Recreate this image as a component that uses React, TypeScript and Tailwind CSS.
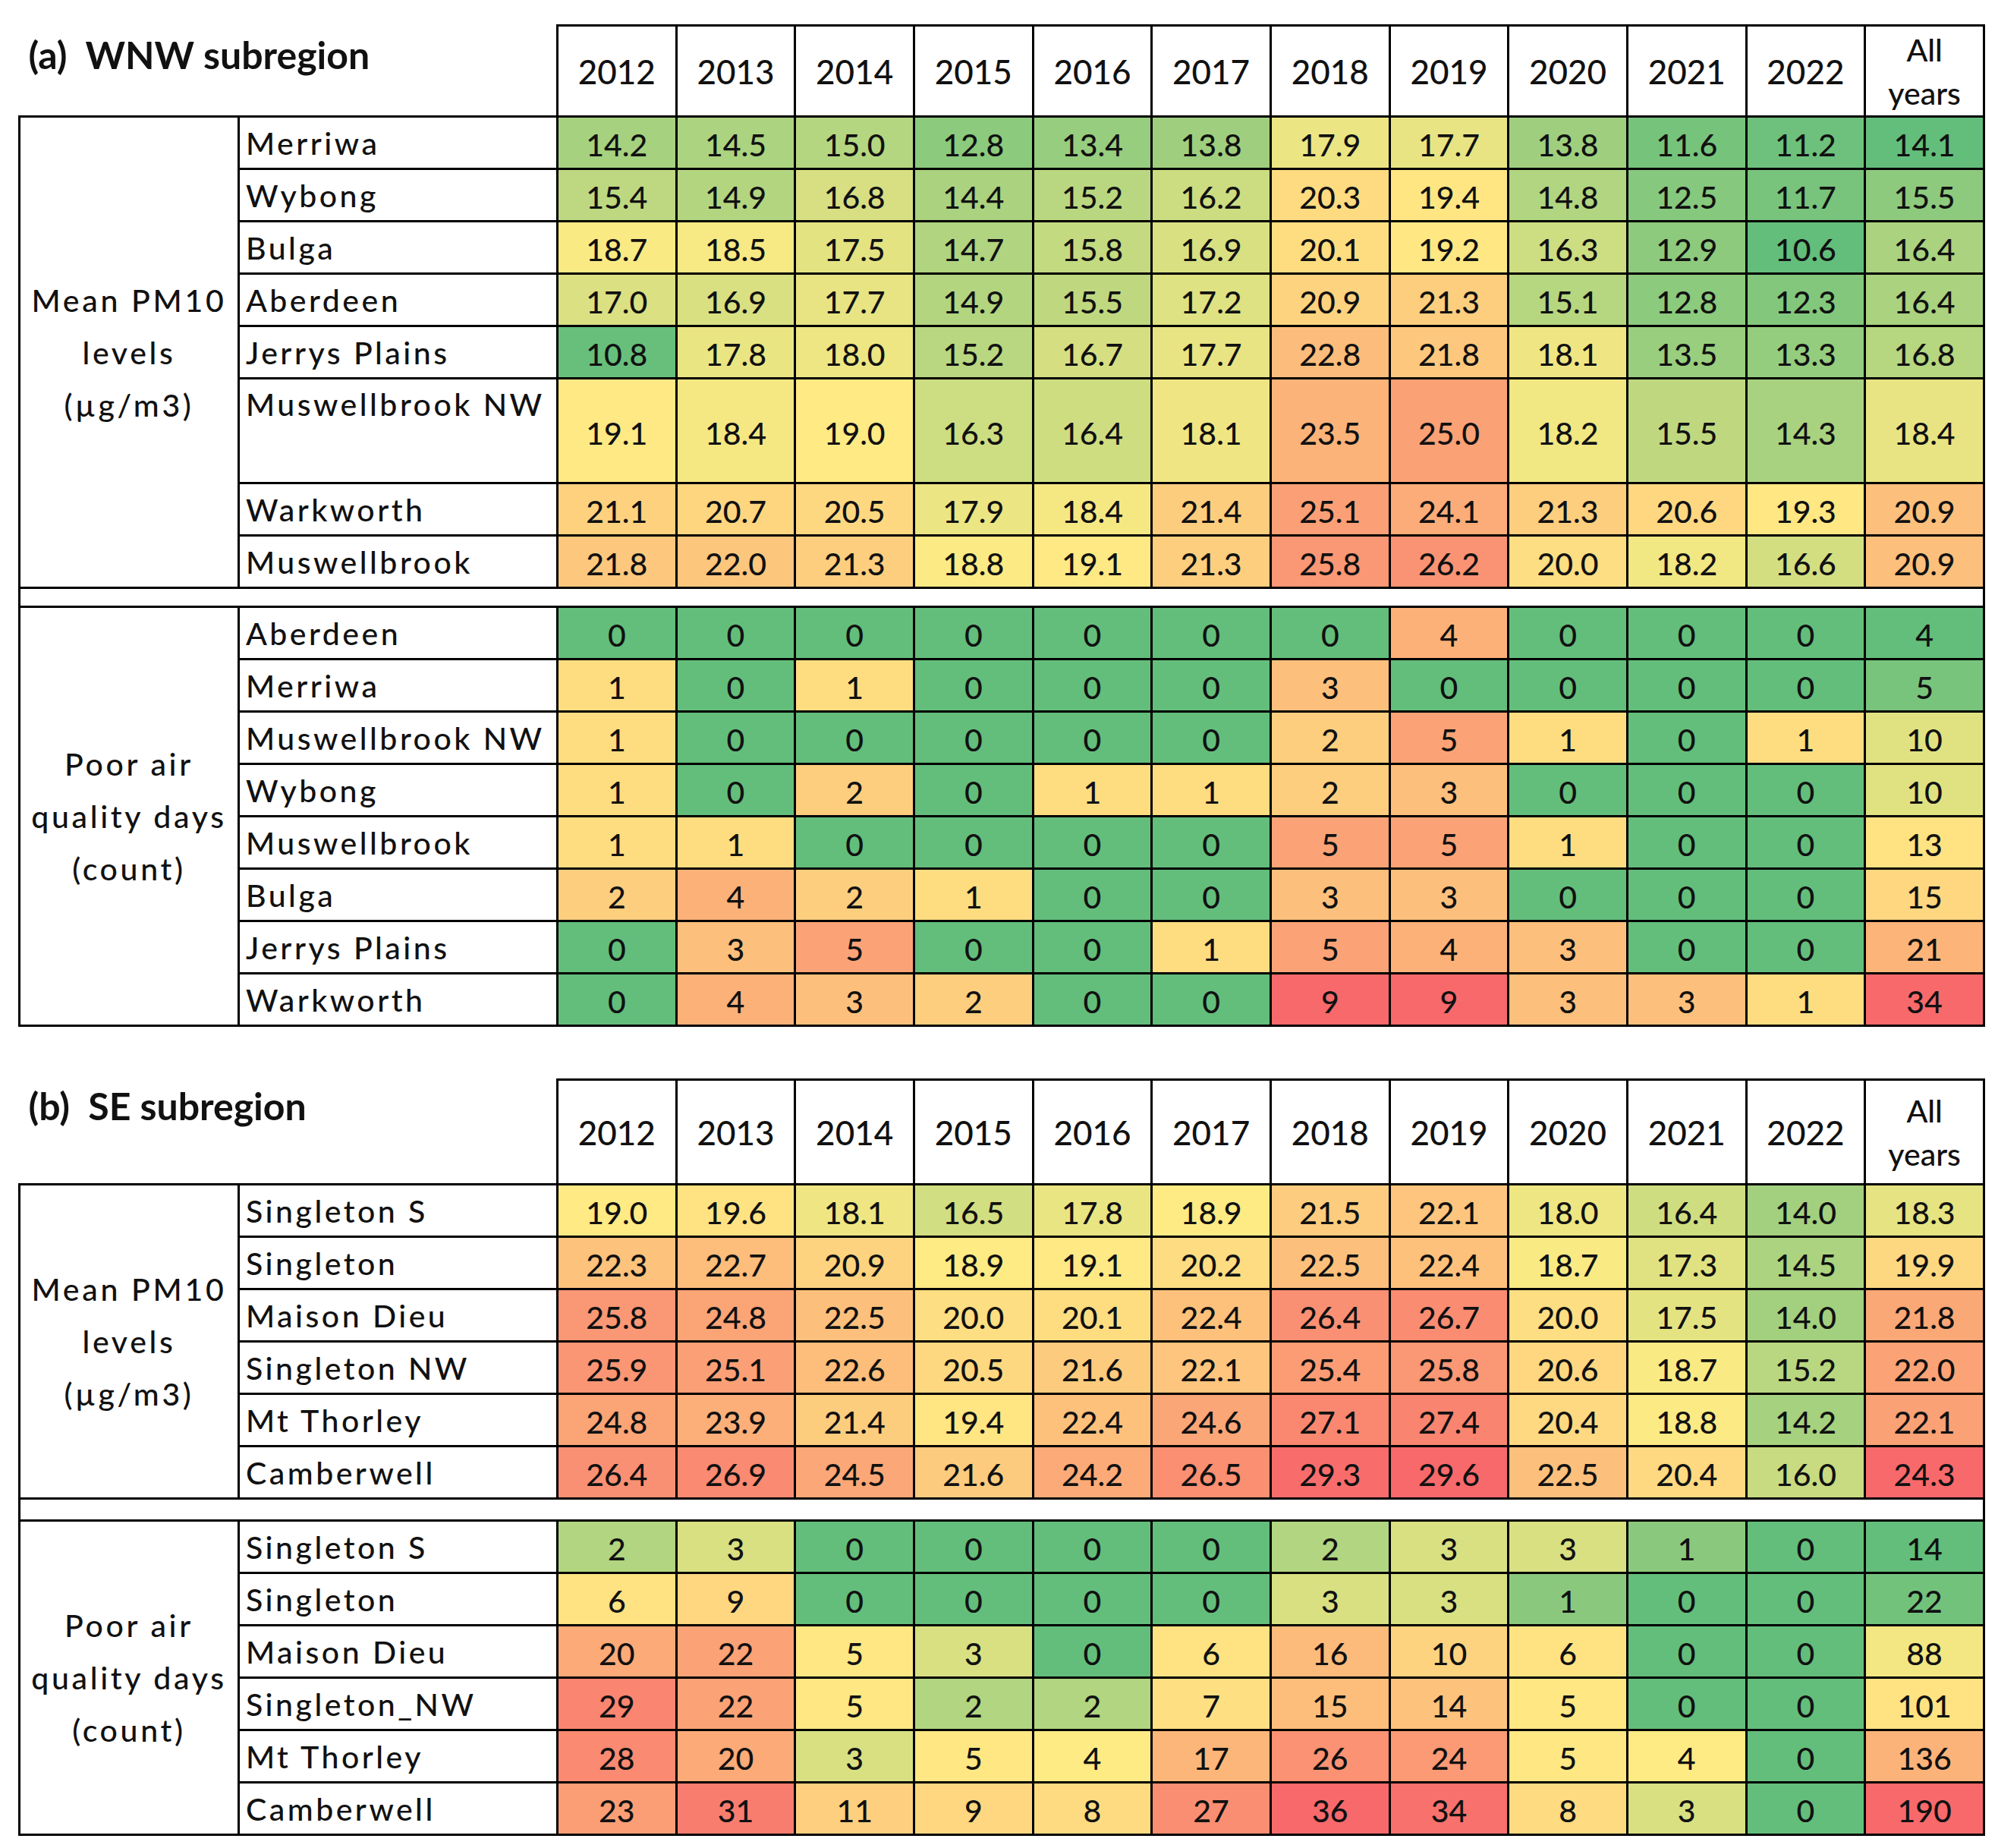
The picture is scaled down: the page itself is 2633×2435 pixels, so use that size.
import React from "react";

type Row = { name: string; values: number[]; total: number; tall?: boolean };
type Scale = { min: number; mid: number; max: number };

const YEARS = ["2012", "2013", "2014", "2015", "2016", "2017", "2018", "2019", "2020", "2021", "2022"];

const wnwMean: Row[] = [
  { name: "Merriwa", values: [14.2, 14.5, 15.0, 12.8, 13.4, 13.8, 17.9, 17.7, 13.8, 11.6, 11.2], total: 14.1 },
  { name: "Wybong", values: [15.4, 14.9, 16.8, 14.4, 15.2, 16.2, 20.3, 19.4, 14.8, 12.5, 11.7], total: 15.5 },
  { name: "Bulga", values: [18.7, 18.5, 17.5, 14.7, 15.8, 16.9, 20.1, 19.2, 16.3, 12.9, 10.6], total: 16.4 },
  { name: "Aberdeen", values: [17.0, 16.9, 17.7, 14.9, 15.5, 17.2, 20.9, 21.3, 15.1, 12.8, 12.3], total: 16.4 },
  { name: "Jerrys Plains", values: [10.8, 17.8, 18.0, 15.2, 16.7, 17.7, 22.8, 21.8, 18.1, 13.5, 13.3], total: 16.8 },
  { name: "Muswellbrook NW", values: [19.1, 18.4, 19.0, 16.3, 16.4, 18.1, 23.5, 25.0, 18.2, 15.5, 14.3], total: 18.4, tall: true },
  { name: "Warkworth", values: [21.1, 20.7, 20.5, 17.9, 18.4, 21.4, 25.1, 24.1, 21.3, 20.6, 19.3], total: 20.9 },
  { name: "Muswellbrook", values: [21.8, 22.0, 21.3, 18.8, 19.1, 21.3, 25.8, 26.2, 20.0, 18.2, 16.6], total: 20.9 },
];

const wnwPoor: Row[] = [
  { name: "Aberdeen", values: [0, 0, 0, 0, 0, 0, 0, 4, 0, 0, 0], total: 4 },
  { name: "Merriwa", values: [1, 0, 1, 0, 0, 0, 3, 0, 0, 0, 0], total: 5 },
  { name: "Muswellbrook NW", values: [1, 0, 0, 0, 0, 0, 2, 5, 1, 0, 1], total: 10 },
  { name: "Wybong", values: [1, 0, 2, 0, 1, 1, 2, 3, 0, 0, 0], total: 10 },
  { name: "Muswellbrook", values: [1, 1, 0, 0, 0, 0, 5, 5, 1, 0, 0], total: 13 },
  { name: "Bulga", values: [2, 4, 2, 1, 0, 0, 3, 3, 0, 0, 0], total: 15 },
  { name: "Jerrys Plains", values: [0, 3, 5, 0, 0, 1, 5, 4, 3, 0, 0], total: 21 },
  { name: "Warkworth", values: [0, 4, 3, 2, 0, 0, 9, 9, 3, 3, 1], total: 34 },
];

const seMean: Row[] = [
  { name: "Singleton S", values: [19.0, 19.6, 18.1, 16.5, 17.8, 18.9, 21.5, 22.1, 18.0, 16.4, 14.0], total: 18.3 },
  { name: "Singleton", values: [22.3, 22.7, 20.9, 18.9, 19.1, 20.2, 22.5, 22.4, 18.7, 17.3, 14.5], total: 19.9 },
  { name: "Maison Dieu", values: [25.8, 24.8, 22.5, 20.0, 20.1, 22.4, 26.4, 26.7, 20.0, 17.5, 14.0], total: 21.8 },
  { name: "Singleton NW", values: [25.9, 25.1, 22.6, 20.5, 21.6, 22.1, 25.4, 25.8, 20.6, 18.7, 15.2], total: 22.0 },
  { name: "Mt Thorley", values: [24.8, 23.9, 21.4, 19.4, 22.4, 24.6, 27.1, 27.4, 20.4, 18.8, 14.2], total: 22.1 },
  { name: "Camberwell", values: [26.4, 26.9, 24.5, 21.6, 24.2, 26.5, 29.3, 29.6, 22.5, 20.4, 16.0], total: 24.3 },
];

const sePoor: Row[] = [
  { name: "Singleton S", values: [2, 3, 0, 0, 0, 0, 2, 3, 3, 1, 0], total: 14 },
  { name: "Singleton", values: [6, 9, 0, 0, 0, 0, 3, 3, 1, 0, 0], total: 22 },
  { name: "Maison Dieu", values: [20, 22, 5, 3, 0, 6, 16, 10, 6, 0, 0], total: 88 },
  { name: "Singleton_NW", values: [29, 22, 5, 2, 2, 7, 15, 14, 5, 0, 0], total: 101 },
  { name: "Mt Thorley", values: [28, 20, 3, 5, 4, 17, 26, 24, 5, 4, 0], total: 136 },
  { name: "Camberwell", values: [23, 31, 11, 9, 8, 27, 36, 34, 8, 3, 0], total: 190 },
];

// excel style 3-colour scale: min / 50th percentile / max
function makeScale(vals: number[]): Scale {
  const s = [...vals].sort((a, b) => a - b);
  const n = s.length;
  const mid = n % 2 ? s[(n - 1) / 2] : (s[n / 2 - 1] + s[n / 2]) / 2;
  return { min: s[0], mid, max: s[n - 1] };
}

const GREEN = [99, 190, 123];
const YELLOW = [255, 235, 132];
const RED = [248, 105, 107];

function mix(a: number[], b: number[], t: number) {
  const c = a.map((x, i) => Math.round(x + (b[i] - x) * t));
  return `rgb(${c[0]}, ${c[1]}, ${c[2]})`;
}

function colour(v: number, { min, mid, max }: Scale) {
  if (v <= mid) return mix(GREEN, YELLOW, mid === min ? 0 : (v - min) / (mid - min));
  return mix(YELLOW, RED, max === mid ? 1 : (v - mid) / (max - mid));
}

const meanYears = makeScale([...wnwMean, ...seMean].flatMap((r) => r.values));
const meanTotals = makeScale([...wnwMean, ...seMean].map((r) => r.total));

function GroupRows({
  rows,
  label,
  digits,
  yearScale,
  totalScale,
}: {
  rows: Row[];
  label: string[];
  digits: number;
  yearScale: Scale;
  totalScale: Scale;
}) {
  return (
    <>
      {rows.map((r, i) => (
        <tr key={r.name + i} className={r.tall ? "h-[138px]" : "h-[69px]"}>
          {i === 0 && (
            <td
              rowSpan={rows.length}
              className="border-[3px] border-black p-0 text-center align-middle text-[41px] font-medium leading-[69px] tracking-[0.09em] whitespace-nowrap"
            >
              {label.map((l) => (
                <div key={l}>{l}</div>
              ))}
            </td>
          )}
          <td
            className={`border-[3px] border-black pl-[8px] pr-0 pb-0 text-left text-[41px] leading-[46px] font-medium tracking-[0.085em] whitespace-nowrap overflow-hidden ${
              r.tall ? "align-top pt-[10px]" : "align-middle pt-[2px]"
            }`}
          >
            {r.name}
          </td>
          {r.values.map((v, j) => (
            <td
              key={j}
              className="border-[3px] border-black px-0 pb-0 text-center align-middle pt-[6px] text-[41px] leading-[46px] font-medium"
              style={{ backgroundColor: colour(v, yearScale) }}
            >
              {v.toFixed(digits)}
            </td>
          ))}
          <td
            className="border-[3px] border-black px-0 pb-0 text-center align-middle pt-[6px] text-[41px] leading-[46px] font-medium"
            style={{ backgroundColor: colour(r.total, totalScale) }}
          >
            {r.total.toFixed(digits)}
          </td>
        </tr>
      ))}
    </>
  );
}

function RegionTable({
  title,
  mean,
  poor,
  headerHeight,
  titlePad,
  gapHeight,
}: {
  title: string;
  mean: Row[];
  poor: Row[];
  headerHeight: string;
  titlePad: string;
  gapHeight: string;
}) {
  const poorYears = makeScale(poor.flatMap((r) => r.values));
  const poorTotals = makeScale(poor.map((r) => r.total));

  return (
    <table className="table-fixed border-collapse w-[2592px] text-[#111]">
      <colgroup>
        <col className="w-[289px]" />
        <col className="w-[420px]" />
        {YEARS.map((y) => (
          <col key={y} />
        ))}
        <col />
      </colgroup>
      <thead>
        <tr className={headerHeight}>
          <th colSpan={2} className={`align-top text-left pl-[12px] font-bold text-[50px] leading-[60px] whitespace-pre ${titlePad}`}>
            {title}
          </th>
          {YEARS.map((y) => (
            <th key={y} className="border-[3px] border-black p-0 font-medium text-[44px] leading-[50px] align-middle">
              {y}
            </th>
          ))}
          <th className="border-[3px] border-black p-0 font-medium text-[41px] leading-[57px] align-middle">
            All
            <br />
            years
          </th>
        </tr>
      </thead>
      <tbody>
        <GroupRows rows={mean} label={["Mean PM10", "levels", "(µg/m3)"]} digits={1} yearScale={meanYears} totalScale={meanTotals} />
        <tr className={gapHeight}>
          <td colSpan={14} className="border-[3px] border-black p-0" />
        </tr>
        <GroupRows rows={poor} label={["Poor air", "quality days", "(count)"]} digits={0} yearScale={poorYears} totalScale={poorTotals} />
      </tbody>
    </table>
  );
}

export default function App() {
  return (
    <div className="w-[2633px] h-[2435px] bg-white pt-[32px] pl-[24px] font-['Lato',sans-serif]">
      <RegionTable
        title="(a)  WNW subregion"
        mean={wnwMean}
        poor={wnwPoor}
        headerHeight="h-[120px]"
        titlePad="pt-[8px]"
        gapHeight="h-[25px]"
      />
      <div className="h-[68px]" />
      <RegionTable
        title="(b)  SE subregion"
        mean={seMean}
        poor={sePoor}
        headerHeight="h-[138px]"
        titlePad="pt-[4px]"
        gapHeight="h-[29px]"
      />
    </div>
  );
}
